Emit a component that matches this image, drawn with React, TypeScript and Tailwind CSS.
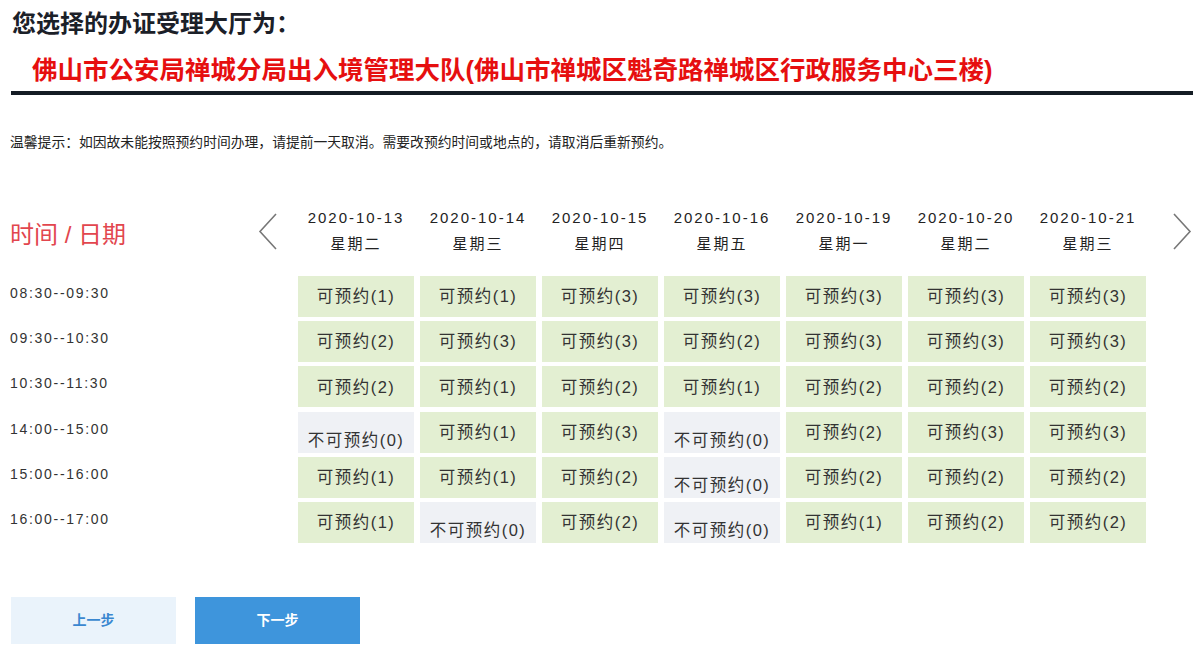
import React from 'react';

type Slot = { ok: boolean; n: number };

const days = [
  { date: '2020-10-13', week: '星期二' },
  { date: '2020-10-14', week: '星期三' },
  { date: '2020-10-15', week: '星期四' },
  { date: '2020-10-16', week: '星期五' },
  { date: '2020-10-19', week: '星期一' },
  { date: '2020-10-20', week: '星期二' },
  { date: '2020-10-21', week: '星期三' },
];

const a = (n: number): Slot => ({ ok: true, n });
const x: Slot = { ok: false, n: 0 };

const rows: { time: string; slots: Slot[] }[] = [
  { time: '08:30--09:30', slots: [a(1), a(1), a(3), a(3), a(3), a(3), a(3)] },
  { time: '09:30--10:30', slots: [a(2), a(3), a(3), a(2), a(3), a(3), a(3)] },
  { time: '10:30--11:30', slots: [a(2), a(1), a(2), a(1), a(2), a(2), a(2)] },
  { time: '14:00--15:00', slots: [x, a(1), a(3), x, a(2), a(3), a(3)] },
  { time: '15:00--16:00', slots: [a(1), a(1), a(2), x, a(2), a(2), a(2)] },
  { time: '16:00--17:00', slots: [a(1), x, a(2), x, a(1), a(2), a(2)] },
];

const cjk = { fontFamily: '"Liberation Sans", "Noto Sans CJK SC", sans-serif' };

const Chevron = ({ dir }: { dir: 'left' | 'right' }) => (
  <svg width="20" height="37" viewBox="0 0 20 37" fill="none">
    <path
      d={dir === 'left' ? 'M18 1 L2 18.5 L18 36' : 'M2 1 L18 18.5 L2 36'}
      stroke="#777"
      strokeWidth="1.6"
    />
  </svg>
);

export default function App() {
  return (
    <div className="w-[1200px] h-[652px] bg-white overflow-hidden text-[#333]" style={cjk}>
      <div className="pl-[12px] pt-[6px]">
        <h1 className="text-[24px] leading-[36px] font-bold text-[#1b2028]">您选择的办证受理大厅为：</h1>
        <h2 className="mt-[10px] pl-[20px] text-[25.5px] leading-[36px] font-bold text-[#e60f0f]">
          佛山市公安局禅城分局出入境管理大队(佛山市禅城区魁奇路禅城区行政服务中心三楼)
        </h2>
      </div>
      <div className="ml-[11px] mr-[7px] mt-[3px] h-[4px] bg-[#141c24]" />

      <p className="pl-[10px] mt-[38px] text-[13.8px] leading-[20px] text-[#222]">
        温馨提示：如因故未能按照预约时间办理，请提前一天取消。需要改预约时间或地点的，请取消后重新预约。
      </p>

      <div className="mt-[52px] pl-[10px]">
        {/* header */}
        <div className="flex gap-[6px] h-[71px]">
          <div className="w-[282px] flex items-start justify-between pr-[14px]">
            <span className="mt-[14px] text-[24px] leading-[32px] text-[#e2464e]">时间 / 日期</span>
            <span className="mt-[8px]">
              <Chevron dir="left" />
            </span>
          </div>
          {days.map((d) => (
            <div key={d.date} className="w-[116px] text-center text-[15px] tracking-[2px] leading-[26px] text-[#222]">
              <div>{d.date}</div>
              <div>{d.week}</div>
            </div>
          ))}
          <div className="flex-1 flex justify-end pr-[8px]">
            <span className="mt-[8px]">
              <Chevron dir="right" />
            </span>
          </div>
        </div>

        {/* slots */}
        <div className="flex flex-col gap-[4.2px]">
          {rows.map((r) => (
            <div key={r.time} className="flex gap-[6px] h-[41px]">
              <div className="w-[282px] pt-[9px] text-[14px] leading-[16px] tracking-[1.7px] text-[#333]">{r.time}</div>
              {r.slots.map((s, i) =>
                s.ok ? (
                  <div
                    key={i}
                    className="w-[116px] flex items-center justify-center bg-[#e3efd2] text-[16.5px] tracking-[1.5px] text-[#333]"
                  >
                    可预约({s.n})
                  </div>
                ) : (
                  <div
                    key={i}
                    className="w-[116px] pt-[18px] text-center bg-[#eff1f5] text-[16.5px] leading-[20px] tracking-[1.5px] text-[#333]"
                  >
                    不可预约({s.n})
                  </div>
                )
              )}
            </div>
          ))}
        </div>
      </div>

      <div className="flex gap-[19px] pl-[11px] mt-[54px]">
        <button className="w-[165px] h-[47px] bg-[#eaf3fb] text-[#3a87d0] text-[14px] font-bold">上一步</button>
        <button className="w-[165px] h-[47px] bg-[#3e95dc] text-white text-[14px] font-bold">下一步</button>
      </div>
    </div>
  );
}
